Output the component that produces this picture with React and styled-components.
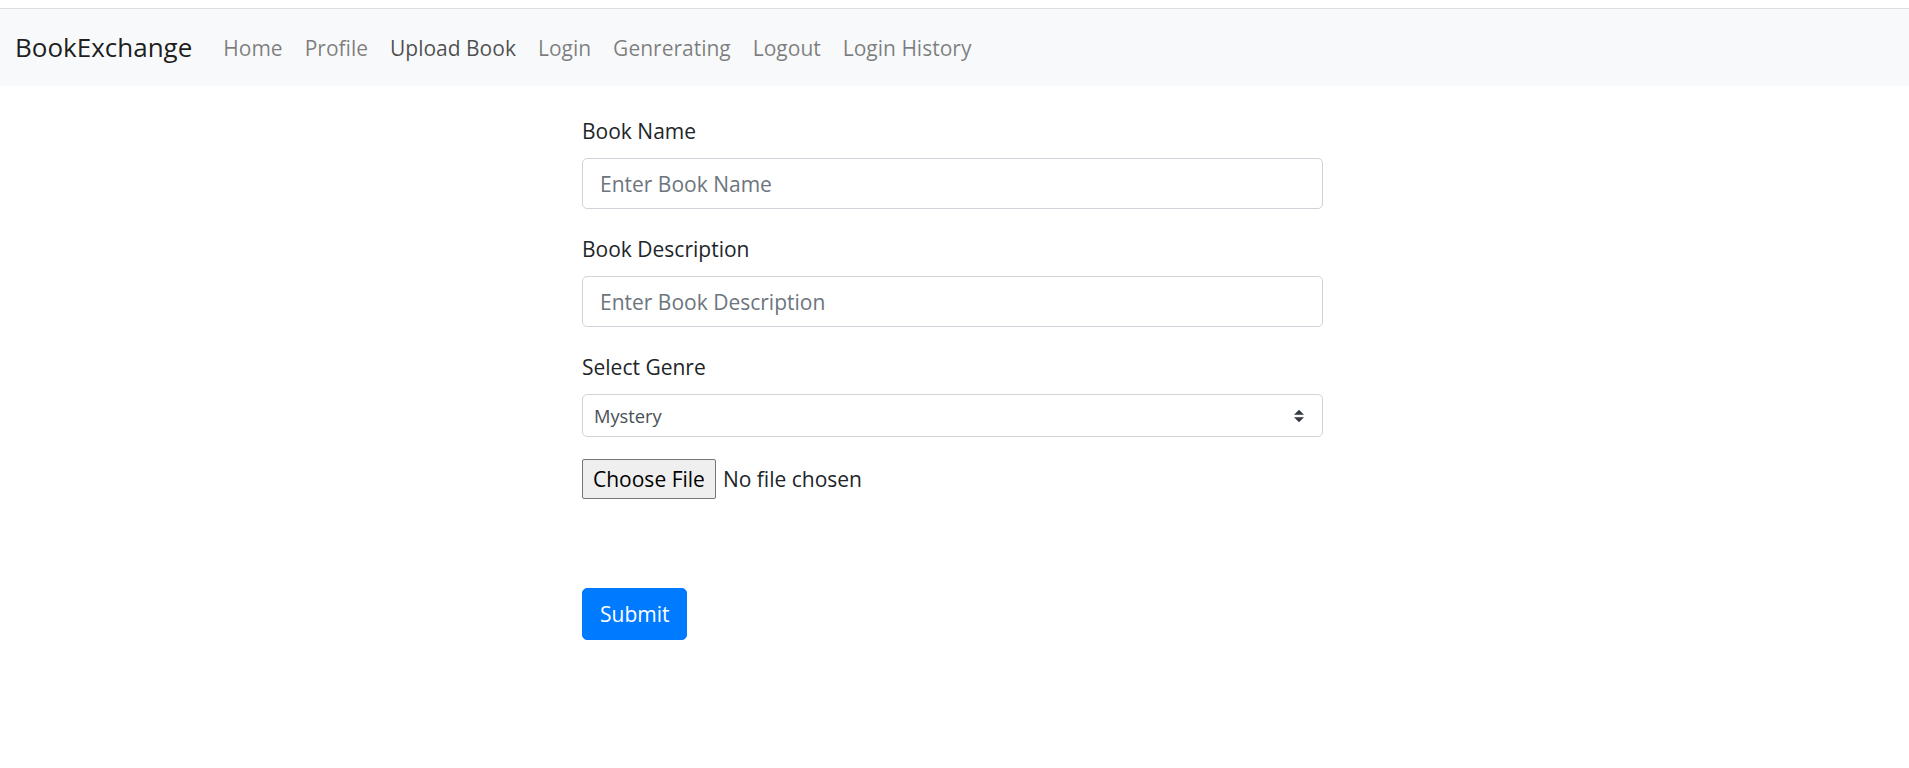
import styled, { createGlobalStyle } from 'styled-components'

const GlobalStyle = createGlobalStyle`
  body {
    margin: 0;
    background: #fff;
    font-family: "Open Sans", "Noto Sans", sans-serif;
    color: #212529;
  }
  * {
    box-sizing: border-box;
  }
`

const Page = styled.div`
  padding-top: 8px;
  min-height: 760px;
`

const Navbar = styled.nav`
  display: flex;
  align-items: center;
  height: 78px;
  padding: 0 15px;
  background-color: #f8f9fa;
  border-top: 1px solid #dcdde0;
`

const Brand = styled.a`
  font-size: 26px;
  line-height: 37px;
  color: rgba(0, 0, 0, 0.9);
  text-decoration: none;
  margin-right: 20px;
  cursor: pointer;
`

const NavList = styled.div`
  display: flex;
  align-items: center;
`

const NavLink = styled.a`
  font-size: 21px;
  line-height: 30px;
  padding: 0 11px;
  color: ${props => (props.$active ? 'rgba(0, 0, 0, 0.7)' : 'rgba(0, 0, 0, 0.5)')};
  text-decoration: none;
  cursor: pointer;

  &:hover {
    color: rgba(0, 0, 0, 0.7);
  }
`

const Main = styled.main`
  display: flex;
  justify-content: center;
  padding: 30px 4px 0 0;
`

const Form = styled.form`
  width: 741px;
  display: flex;
  flex-direction: column;
`

const FormGroup = styled.div`
  display: flex;
  flex-direction: column;
  margin-bottom: ${props => props.$gap || 25}px;
`

const Label = styled.label`
  font-size: 21px;
  line-height: 30px;
  color: #212529;
  margin-bottom: 12px;
`

const Input = styled.input`
  width: 100%;
  height: 51px;
  padding: 0 17px;
  font-family: inherit;
  font-size: 21px;
  line-height: 30px;
  color: #495057;
  background: #fff;
  border: 1px solid #ced4da;
  border-radius: 5px;
  outline: none;

  &::placeholder {
    color: #6c757d;
  }
`

const SelectWrap = styled.div`
  position: relative;
`

const Select = styled.select`
  width: 100%;
  height: 43px;
  padding: 0 40px 0 11px;
  font-family: inherit;
  font-size: 18.3px;
  color: #495057;
  background: #fff;
  border: 1px solid #ced4da;
  border-radius: 5px;
  appearance: none;
  outline: none;
`

const SelectArrow = styled.svg`
  position: absolute;
  right: 19px;
  top: 50%;
  width: 10px;
  height: 13px;
  transform: translateY(-50%);
  pointer-events: none;
`

const FileRow = styled.label`
  display: flex;
  align-items: center;
  height: 40px;
  margin-bottom: 89px;
  cursor: pointer;
`

const FileButton = styled.span`
  display: inline-flex;
  align-items: center;
  height: 40px;
  padding: 0 10px;
  font-size: 21px;
  line-height: 30px;
  color: #000;
  background: #efefef;
  border: 1px solid #767676;
  border-radius: 2px;
`

const FileName = styled.span`
  margin-left: 7px;
  font-size: 21px;
  line-height: 30px;
  color: #212529;
`

const HiddenFile = styled.input`
  display: none;
`

const SubmitButton = styled.button`
  align-self: flex-start;
  height: 52px;
  padding: 0 17px;
  font-family: inherit;
  font-size: 21px;
  line-height: 30px;
  color: #fff;
  background-color: #007bff;
  border: 1px solid #007bff;
  border-radius: 5px;
  cursor: pointer;
`

const links = ['Home', 'Profile', 'Upload Book', 'Login', 'Genrerating', 'Logout', 'Login History']

export default function App() {
  return (
    <Page>
      <GlobalStyle />
      <Navbar>
        <Brand>BookExchange</Brand>
        <NavList>
          {links.map(link => (
            <NavLink key={link} $active={link === 'Upload Book'}>{link}</NavLink>
          ))}
        </NavList>
      </Navbar>

      <Main>
        <Form onSubmit={e => e.preventDefault()}>
          <FormGroup>
            <Label htmlFor="bookName">Book Name</Label>
            <Input id="bookName" type="text" placeholder="Enter Book Name" />
          </FormGroup>

          <FormGroup>
            <Label htmlFor="bookDesc">Book Description</Label>
            <Input id="bookDesc" type="text" placeholder="Enter Book Description" />
          </FormGroup>

          <FormGroup $gap={22}>
            <Label htmlFor="genre">Select Genre</Label>
            <SelectWrap>
              <Select id="genre" defaultValue="Mystery">
                <option>Mystery</option>
                <option>Fantasy</option>
                <option>Romance</option>
                <option>Science Fiction</option>
              </Select>
              <SelectArrow viewBox="0 0 4 5">
                <path d="M2 0L0 2h4zm0 5L0 3h4z" fill="#343a40" />
              </SelectArrow>
            </SelectWrap>
          </FormGroup>

          <FileRow>
            <HiddenFile type="file" />
            <FileButton>Choose File</FileButton>
            <FileName>No file chosen</FileName>
          </FileRow>

          <SubmitButton type="submit">Submit</SubmitButton>
        </Form>
      </Main>
    </Page>
  )
}
